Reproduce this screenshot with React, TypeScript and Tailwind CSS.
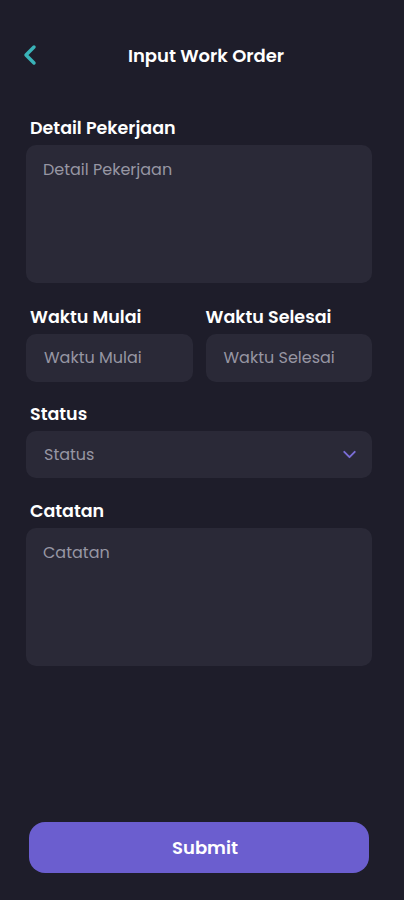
import React from "react";
import { ChevronLeft, ChevronDown } from "lucide-react";

const font = { fontFamily: "Poppins, Inter, 'Noto Sans', sans-serif" };

const Label = ({ children, flush }: { children: React.ReactNode; flush?: boolean }) => (
  <p
    className={
      flush
        ? "text-[17.5px] font-semibold text-white leading-[22px] mb-[6px]"
        : "text-[17.5px] font-semibold text-white leading-[22px] mb-[6px] px-1"
    }
  >
    {children}
  </p>
);

export default function App() {
  return (
    <div
      className="min-h-[900px] w-full bg-[#1e1d2a] flex flex-col pl-[26px] pr-[32px]"
      style={font}
    >
      {/* Header */}
      <div className="relative flex items-center justify-center h-[50px] mt-[30px]">
        <button className="absolute left-[-12px] top-1/2 -translate-y-1/2 text-[#3ab3b8]">
          <ChevronLeft size={32} strokeWidth={2.6} />
        </button>
        <h1 className="pl-[14px] text-[18px] font-semibold text-white">Input Work Order</h1>
      </div>

      <div className="mt-[37px]">
        <Label>Detail Pekerjaan</Label>
        <div className="h-[138px] rounded-[10px] bg-[#2a2937] px-[17px] pt-[13px] text-[16px] text-[#9796a3]">
          Detail Pekerjaan
        </div>
      </div>

      <div className="mt-[23px] flex gap-[13px]">
        <div className="flex-1">
          <Label>Waktu Mulai</Label>
          <div className="h-[48px] rounded-[10px] bg-[#2a2937] px-[18px] flex items-center text-[16px] text-[#9796a3]">
            Waktu Mulai
          </div>
        </div>
        <div className="flex-1">
          <Label flush>Waktu Selesai</Label>
          <div className="h-[48px] rounded-[10px] bg-[#2a2937] px-[18px] flex items-center text-[16px] text-[#9796a3]">
            Waktu Selesai
          </div>
        </div>
      </div>

      <div className="mt-[21px]">
        <Label>Status</Label>
        <div className="h-[47px] rounded-[10px] bg-[#2a2937] pl-[18px] pr-[12px] flex items-center justify-between text-[16px] text-[#9796a3]">
          <span>Status</span>
          <ChevronDown size={21} className="text-[#7a6dd6]" strokeWidth={2.2} />
        </div>
      </div>

      <div className="mt-[22px]">
        <Label>Catatan</Label>
        <div className="h-[138px] rounded-[10px] bg-[#2a2937] px-[17px] pt-[13px] text-[16px] text-[#9796a3]">
          Catatan
        </div>
      </div>

      <div className="mt-auto pb-[27px] px-[3px]">
        <button className="w-full h-[51px] rounded-[16px] bg-[#6b5ecf] pl-[12px] text-white text-[18px] font-semibold">
          Submit
        </button>
      </div>
    </div>
  );
}
